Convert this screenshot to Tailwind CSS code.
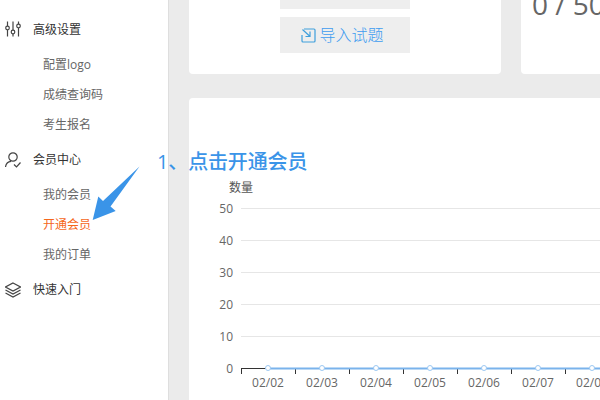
<!DOCTYPE html>
<html lang="en">
<head>
    <meta charset="UTF-8">
    <title>会员中心</title>
    <script src="https://cdn.jsdelivr.net/npm/@tailwindcss/browser@4"></script>
</head>
<body class="relative w-[600px] h-[400px] overflow-hidden bg-[#ebebeb] font-['Open_Sans','Noto_Sans_CJK_SC',sans-serif]">
    <div class="flex h-full">
        <!-- Sidebar -->
        <aside class="w-[169px] shrink-0 h-full bg-white border-r border-[#dedede] pt-[15px] text-[12px] leading-[30px]">
            <div class="flex items-center h-[30px] pl-[5px] text-[#333]">
                <svg class="w-[16px] h-[16px] mr-[12px] mb-[2px]" viewBox="0 0 16 16" fill="none" stroke="#444" stroke-width="1.2">
                    <path d="M2.5 0.5V5M2.5 9V15.5M8 0.5V9M8 13V15.5M13.5 0.5V3M13.5 7V15.5"/>
                    <circle cx="2.5" cy="7" r="1.8"/><circle cx="8" cy="11" r="1.8"/><circle cx="13.5" cy="5" r="1.8"/>
                </svg>
                <span>高级设置</span>
            </div>
            <ul class="pl-[43px] text-[#666] pt-[5px] pb-[5px]">
                <li>配置logo</li>
                <li>成绩查询码</li>
                <li>考生报名</li>
            </ul>
            <div class="flex items-center h-[30px] pl-[5px] text-[#333]">
                <svg class="w-[16px] h-[16px] mr-[12px]" viewBox="0 0 16 16" fill="none" stroke="#444" stroke-width="1.2">
                    <circle cx="8" cy="5" r="4.2"/>
                    <path d="M0.5 15C1 11.5 3.5 9.5 6 9.3M9 12.5L11.5 15L15.5 10.5"/>
                </svg>
                <span>会员中心</span>
            </div>
            <ul class="pl-[43px] text-[#666] pt-[5px] pb-[5px]">
                <li>我的会员</li>
                <li class="text-[#f5671c]">开通会员</li>
                <li>我的订单</li>
            </ul>
            <div class="flex items-center h-[30px] pl-[5px] text-[#333]">
                <svg class="w-[16px] h-[16px] mr-[12px]" viewBox="0 0 16 16" fill="none" stroke="#444" stroke-width="1.2">
                    <path d="M8 1L15.5 5L8 9L0.5 5Z"/>
                    <path d="M0.5 8L8 12L15.5 8M0.5 11L8 15L15.5 11"/>
                </svg>
                <span>快速入门</span>
            </div>
        </aside>

        <!-- Main -->
        <main class="flex-1 min-w-0 pl-[20px] overflow-hidden">
            <div class="flex gap-[20px] h-[74px] w-[560px]">
                <div class="w-[312px] shrink-0 bg-white rounded-b-[4px] flex flex-col items-center gap-[8px]">
                    <div class="w-[130px] h-[9px] bg-[#eeeeee]"></div>
                    <div class="w-[130px] h-[36px] bg-[#eeeeee] flex items-center justify-center pr-[5px] text-[16px] font-light text-[#3f9cf0]">
                        <svg class="w-[15px] h-[15px] mr-[3px]" viewBox="0 0 15 15" fill="none" stroke="#3f9fdc" stroke-width="1.2">
                            <path d="M3 1H13C13.6 1 14 1.4 14 2V13C14 13.6 13.6 14 13 14H2C1.4 14 1 13.6 1 13V7"/>
                            <path d="M1.500 1.500L8.500 8M9 3.500V8.500H4.500"/>
                        </svg>
                        <span>导入试题</span>
                    </div>
                </div>
                <div class="flex-1 bg-white rounded-b-[4px] overflow-hidden pl-[11px]">
                    <div class="text-[28px] leading-[28px] mt-[-10px] text-[#666] whitespace-nowrap">0 / 50</div>
                </div>
            </div>

            <!-- Chart card -->
            <div class="mt-[24px] w-[560px] h-[320px] bg-white rounded-t-[4px] pt-[81px]">
                <svg class="block" width="420" height="225" viewBox="189 179 420 225" font-size="12" fill="#666" font-family="'Open Sans','Noto Sans CJK SC',sans-serif">
                    <text x="241" y="192" text-anchor="middle" fill="#555">数量</text>
                    <g stroke="#e6e6e6" stroke-width="1">
                        <path d="M241 208.500H609M241 240.500H609M241 272.500H609M241 304.500H609M241 336.500H609"/>
                    </g>
                    <g text-anchor="end">
                        <text x="233" y="213">50</text>
                        <text x="233" y="245">40</text>
                        <text x="233" y="277">30</text>
                        <text x="233" y="309">20</text>
                        <text x="233" y="341">10</text>
                        <text x="233" y="373">0</text>
                    </g>
                    <path d="M241 368.500H609M241.500 368V374M295.500 368V374M349.500 368V374M403.500 368V374M457.500 368V374M511.500 368V374M565.500 368V374" stroke="#333" stroke-width="1" fill="none"/>
                    <path d="M268 368.500H609" stroke="#7ab3ec" stroke-width="2"/>
                    <g fill="#fff" stroke="#9cc8f2" stroke-width="1">
                        <circle cx="268" cy="368" r="2.500"/><circle cx="322" cy="368" r="2.500"/><circle cx="376" cy="368" r="2.500"/><circle cx="430" cy="368" r="2.500"/><circle cx="484" cy="368" r="2.500"/><circle cx="538" cy="368" r="2.500"/><circle cx="592" cy="368" r="2.500"/>
                    </g>
                    <g text-anchor="middle">
                        <text x="268" y="387">02/02</text>
                        <text x="322" y="387">02/03</text>
                        <text x="376" y="387">02/04</text>
                        <text x="430" y="387">02/05</text>
                        <text x="484" y="387">02/06</text>
                        <text x="538" y="387">02/07</text>
                        <text x="592" y="387">02/08</text>
                    </g>
                </svg>
            </div>
        </main>
    </div>

    <!-- Annotation over the page -->
    <svg class="absolute left-[85px] top-[160px]" width="60" height="65" viewBox="85 160 60 65">
        <path d="M139.500 166.500L103 201L98.300 196.500L92.700 220L115.700 211L110.500 206.500Z" fill="#3a94e8"/>
    </svg>
    <div class="absolute left-[157px] top-[148px] text-[20px] leading-[28px] font-medium text-[#3a94e8] whitespace-nowrap tracking-[-0.15px]">1、点击开通会员</div>
</body>
</html>
